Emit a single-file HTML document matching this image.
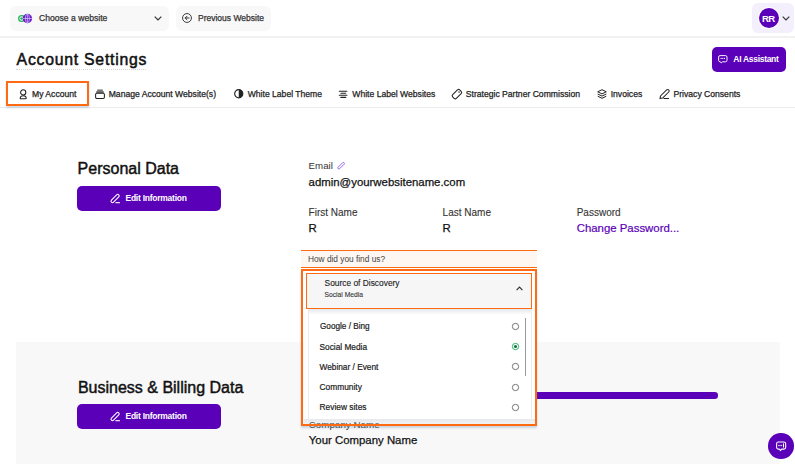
<!DOCTYPE html>
<html><head><meta charset="utf-8">
<style>
*{margin:0;padding:0;box-sizing:border-box}
html,body{width:795px;height:464px;overflow:hidden;background:#fff;font-family:"Liberation Sans",sans-serif;color:#1a1a1a}
.a{position:absolute;white-space:nowrap}
.t{position:absolute;white-space:nowrap;line-height:1}
.m{-webkit-text-stroke:0.25px currentColor}
svg{position:absolute;overflow:visible}
</style></head><body>

<!-- header -->
<div class="a" style="left:10px;top:6.2px;width:159px;height:25.3px;background:#f8f8f8;border-radius:6px"></div>
<svg style="left:0;top:0" width="40" height="30" viewBox="0 0 40 30">
  <circle cx="21.6" cy="18.5" r="2.9" fill="none" stroke="#22b35e" stroke-width="1.3"/>
  <circle cx="21.6" cy="18.5" r="1.3" fill="#22b35e"/>
  <circle cx="27.4" cy="18.5" r="4.7" fill="#6a1ec8"/>
  <ellipse cx="27.4" cy="18.5" rx="2" ry="4.4" fill="none" stroke="#e9dcff" stroke-width="0.6"/>
  <path d="M22.8 18.5h9.2M27.4 14v9" stroke="#e9dcff" stroke-width="0.6" fill="none"/>
</svg>
<div class="t m" style="left:39px;top:14.2px;font-size:8.6px;color:#333">Choose a website</div>
<svg style="left:153.8px;top:15.6px" width="8" height="5" viewBox="0 0 8 5"><path d="M0.7 0.7L4 4L7.3 0.7" stroke="#333" stroke-width="1.2" fill="none"/></svg>

<div class="a" style="left:176px;top:6.2px;width:95px;height:25.3px;background:#f8f8f8;border-radius:6px"></div>
<svg style="left:182.2px;top:13.4px" width="10" height="10" viewBox="0 0 10 10"><circle cx="5" cy="5" r="4.45" fill="none" stroke="#333" stroke-width="0.95"/><path d="M7 5H3.2M4.9 3.3L3.2 5l1.7 1.7" stroke="#333" stroke-width="1" fill="none" stroke-linecap="round" stroke-linejoin="round"/></svg>
<div class="t m" style="left:198px;top:14.2px;font-size:8.5px;color:#333">Previous Website</div>

<div class="a" style="left:752px;top:3px;width:41.5px;height:30px;background:#f3effc;border-radius:6px"></div>
<div class="a" style="left:758.5px;top:8.3px;width:20px;height:20px;border-radius:50%;background:#5a00b8;box-shadow:0 0 0 1px #fff"></div>
<div class="t" style="left:758.5px;top:13.9px;width:20px;text-align:center;font-size:9.6px;letter-spacing:-0.7px;text-indent:-0.3px;font-weight:bold;color:#fff">RR</div>
<svg style="left:782px;top:16px" width="8" height="5" viewBox="0 0 8 5"><path d="M0.7 0.7L4 4L7.3 0.7" stroke="#333" stroke-width="1.2" fill="none"/></svg>

<div class="a" style="left:0;top:35.8px;width:795px;height:2px;background:#f1f1f1"></div>

<!-- title -->
<div class="t" style="left:16.6px;top:51.5px;font-size:15.8px;letter-spacing:0.75px;-webkit-text-stroke:0.5px #111;color:#111">Account Settings</div>
<div class="a" style="left:16px;top:69px;width:130px;height:0;border-top:1px dotted #d6d6d6"></div>

<div class="a" style="left:711.5px;top:46.8px;width:74.5px;height:25px;background:#5a00b8;border-radius:5px"></div>
<svg style="left:717.5px;top:55px" width="10" height="9" viewBox="0 0 10 9"><path d="M2.1 0.6h5.4a1.5 1.5 0 0 1 1.5 1.5v3.2a1.5 1.5 0 0 1-1.5 1.5H4.5L3.2 8 2.5 6.8H2.1A1.5 1.5 0 0 1 0.6 5.3V2.1A1.5 1.5 0 0 1 2.1 0.6z" fill="none" stroke="#fff" stroke-width="0.95" stroke-linejoin="round"/><circle cx="3.1" cy="3.4" r="0.6" fill="#fff"/><circle cx="4.8" cy="3.4" r="0.6" fill="#fff"/><circle cx="6.5" cy="3.4" r="0.6" fill="#fff"/></svg>
<div class="t" style="left:733.3px;top:55.3px;font-size:8.5px;letter-spacing:-0.3px;font-weight:bold;color:#fff">AI Assistant</div>

<!-- tabs -->
<div class="a" style="left:0;top:107px;width:795px;height:1px;background:#ececec"></div>
<div id="tabs" class="m" style="position:absolute;left:0;top:0;font-size:8.6px;color:#222">
<div class="t" style="left:32px;top:89.5px">My Account</div>
<div class="t" style="left:108.7px;top:89.5px">Manage Account Website(s)</div>
<div class="t" style="left:247.7px;top:89.5px">White Label Theme</div>
<div class="t" style="left:352.3px;top:89.5px">White Label Websites</div>
<div class="t" style="left:465.8px;top:89.5px">Strategic Partner Commission</div>
<div class="t" style="left:610.7px;top:89.5px">Invoices</div>
<div class="t" style="left:673.5px;top:89.5px">Privacy Consents</div>
</div>
<!-- tab icons -->
<svg style="left:18.8px;top:87.8px" width="10" height="12" viewBox="0 0 10 12"><circle cx="4.2" cy="4.4" r="2.6" fill="none" stroke="#222" stroke-width="1.05"/><path d="M1.2 10.3c0-1.6 1.2-2.6 3-2.6s3 1 3 2.6c0 .3-.2.5-.5.5H1.7c-.3 0-.5-.2-.5-.5z" fill="none" stroke="#222" stroke-width="1.05"/></svg>
<svg style="left:95px;top:89px" width="10" height="10" viewBox="0 0 10 10"><rect x="0.6" y="4.2" width="8.8" height="5.2" rx="1.2" fill="none" stroke="#222" stroke-width="1.05"/><rect x="1.3" y="2.2" width="7.4" height="2" fill="#555"/><rect x="2.2" y="0.5" width="5.6" height="1.4" fill="#666"/></svg>
<svg style="left:234px;top:89px" width="9.5" height="9.5" viewBox="0 0 10 10"><circle cx="5" cy="5" r="4.3" fill="none" stroke="#222" stroke-width="1.2"/><path d="M5 0.7a4.3 4.3 0 0 1 0 8.6z" fill="#222"/></svg>
<svg style="left:334px;top:86px" width="20" height="16" viewBox="0 0 20 16"><path d="M5.3 5.2h7.6M7 7.3h4.7M5.3 9.3h7.6M6.8 11.4h5" stroke="#222" stroke-width="1.1" stroke-linecap="round"/></svg>
<svg style="left:448px;top:86px" width="20" height="16" viewBox="0 0 20 16"><g transform="rotate(-45 8.9 8.1)"><rect x="3.9" y="5.5" width="10" height="5.2" rx="1.6" fill="none" stroke="#222" stroke-width="1.05"/><circle cx="11.9" cy="8.1" r="0.75" fill="#222"/></g></svg>
<svg style="left:597.2px;top:89px" width="10" height="10" viewBox="0 0 10 10"><path d="M5 0.7L9.3 2.8 5 4.9 0.7 2.8z M0.7 5L5 7.1 9.3 5 M0.7 7.2L5 9.3 9.3 7.2" fill="none" stroke="#222" stroke-width="1" stroke-linejoin="round"/></svg>
<svg style="left:659px;top:89px" width="11" height="11" viewBox="0 0 11 11"><path d="M1 9.6l0.5-2.6L7.6 0.9a1.45 1.45 0 0 1 2.1 2.1L3.6 9.1z" fill="none" stroke="#222" stroke-width="1.05" stroke-linejoin="round"/><path d="M4.6 9.5h5.4" stroke="#222" stroke-width="1.05"/></svg>

<div class="a" style="left:6px;top:81px;width:82.5px;height:25.2px;border:2.6px solid #ff6a13;box-shadow:0 1.5px 2px rgba(120,150,180,0.35)"></div>

<!-- personal data -->
<div class="t" style="left:77.6px;top:161px;font-size:16px;color:#111;-webkit-text-stroke:0.45px #111">Personal Data</div>
<div class="a" style="left:77px;top:186px;width:144px;height:25px;background:#5a00b8;border-radius:5px"></div>
<svg style="left:105px;top:190px" width="20" height="16" viewBox="0 0 20 16"><g transform="rotate(-45 10.1 8.5)"><rect x="4.9" y="7" width="10.4" height="3" rx="1.5" fill="none" stroke="#fff" stroke-width="1.05"/></g><path d="M10.4 12.7h4.5" stroke="#fff" stroke-width="1.1"/></svg>
<div class="t" style="left:125.5px;top:194.3px;font-size:8.5px;letter-spacing:-0.25px;font-weight:bold;color:#fff">Edit Information</div>

<div class="t" style="left:308.6px;top:161.3px;font-size:9.7px;color:#333">Email</div>
<svg style="left:333px;top:158px" width="16" height="16" viewBox="0 0 16 16"><g transform="rotate(-45 8.1 7.75)"><rect x="3.9" y="6.7" width="8.4" height="2.1" rx="1.05" fill="none" stroke="#8f5ee6" stroke-width="0.9"/></g></svg>
<div class="t" style="left:308.6px;top:177px;font-size:11.4px;color:#111;-webkit-text-stroke:0.25px #111">admin@yourwebsitename.com</div>

<div class="t" style="left:308.6px;top:207.5px;font-size:10px;color:#333;-webkit-text-stroke:0.1px #333">First Name</div>
<div class="t" style="left:308.6px;top:222.5px;font-size:11.4px;color:#111;-webkit-text-stroke:0.25px #111">R</div>
<div class="t" style="left:442.6px;top:207.5px;font-size:10px;color:#333;-webkit-text-stroke:0.1px #333">Last Name</div>
<div class="t" style="left:442.6px;top:222.5px;font-size:11.4px;color:#111;-webkit-text-stroke:0.25px #111">R</div>
<div class="t" style="left:576.7px;top:207.5px;font-size:10px;color:#333;-webkit-text-stroke:0.1px #333">Password</div>
<div class="t" style="left:576.7px;top:222.5px;font-size:11.4px;color:#5a00b8;-webkit-text-stroke:0.2px #5a00b8">Change Password...</div>

<!-- business section -->
<div class="a" style="left:16px;top:342px;width:764px;height:122px;background:#f8f8f8"></div>
<div class="t" style="left:77.9px;top:379.5px;font-size:16px;color:#111;-webkit-text-stroke:0.45px #111">Business &amp; Billing Data</div>
<div class="a" style="left:77px;top:404px;width:144px;height:25px;background:#5a00b8;border-radius:5px"></div>
<svg style="left:105px;top:408px" width="20" height="16" viewBox="0 0 20 16"><g transform="rotate(-45 10.1 8.5)"><rect x="4.9" y="7" width="10.4" height="3" rx="1.5" fill="none" stroke="#fff" stroke-width="1.05"/></g><path d="M10.4 12.7h4.5" stroke="#fff" stroke-width="1.1"/></svg>
<div class="t" style="left:125.5px;top:412.3px;font-size:8.5px;letter-spacing:-0.25px;font-weight:bold;color:#fff">Edit Information</div>
<div class="a" style="left:522px;top:391.8px;width:196px;height:6.8px;background:#5a00b8;border-radius:0 3.3px 3.3px 0"></div>
<div class="t" style="left:308.8px;top:419.5px;font-size:9.8px;color:#333">Company Name</div>
<div class="t" style="left:308.8px;top:435px;font-size:11.4px;color:#111;-webkit-text-stroke:0.25px #111">Your Company Name</div>

<!-- dropdown overlay -->
<div class="a" style="left:301px;top:250px;width:236px;height:18px;background:#fdf6f1;border-top:1.9px solid #ff6a13;border-bottom:1.7px solid #ff6a13"></div>
<div class="t" style="left:308px;top:254.5px;font-size:8.3px;color:#444">How did you find us?</div>

<div class="a" style="left:301.2px;top:269.2px;width:236px;height:157.2px;border:2.4px solid #ff6a13;box-shadow:0 1.5px 2px rgba(120,150,180,0.35)"></div>
<div class="a" style="left:306px;top:272.8px;width:226.3px;height:36.4px;background:#f6f6f7;border:1.8px solid #ff6a13"></div>
<div class="t" style="left:324.6px;top:279px;font-size:8.4px;color:#222;-webkit-text-stroke:0.12px #222">Source of Discovery</div>
<div class="t" style="left:324.6px;top:292px;font-size:6.7px;color:#333;-webkit-text-stroke:0.1px #333">Social Media</div>
<svg style="left:516px;top:286px" width="7" height="5" viewBox="0 0 7 5"><path d="M0.6 4.2L3.5 1.2 6.4 4.2" stroke="#333" stroke-width="1.2" fill="none"/></svg>

<div class="a" style="left:303.6px;top:309px;width:231.6px;height:109.6px;background:#fff"></div>
<div class="a" style="left:303.6px;top:418.6px;width:231.6px;height:5px;background:linear-gradient(rgba(205,210,220,0.4),rgba(205,210,220,0.15))"></div>
<div class="a" style="left:308px;top:309px;width:224px;height:110px;background:#fff;border-left:1px solid #ececec;border-right:1px solid #ececec"></div>
<div class="a" style="left:308px;top:308.5px;width:224px;height:6px;background:linear-gradient(#e6e8ec,rgba(255,255,255,0))"></div>
<div class="a" style="left:525.2px;top:318px;width:1px;height:58px;background:#999"></div>
<div class="t" style="left:320px;top:323px;font-size:8.2px;color:#222;-webkit-text-stroke:0.2px #222">Google / Bing</div>
<div class="t" style="left:319.5px;top:343px;-webkit-text-stroke:0.2px #222;font-size:8.3px;color:#222">Social Media</div>
<div class="t" style="left:319.5px;top:363px;-webkit-text-stroke:0.2px #222;font-size:8.3px;color:#222">Webinar / Event</div>
<div class="t" style="left:319.5px;top:383px;-webkit-text-stroke:0.2px #222;font-size:8.4px;color:#222">Community</div>
<div class="t" style="left:319.5px;top:403px;-webkit-text-stroke:0.2px #222;font-size:8.4px;color:#222">Review sites</div>
<svg style="left:508px;top:318.9px" width="15" height="15" viewBox="0 0 15 15"><circle cx="7.5" cy="7.5" r="3.15" fill="none" stroke="#666" stroke-width="0.9"/></svg>
<svg style="left:508px;top:339.1px" width="15" height="15" viewBox="0 0 15 15"><circle cx="7.5" cy="7.5" r="3.15" fill="#fff" stroke="#27ad64" stroke-width="0.95"/><circle cx="7.5" cy="7.5" r="1.55" fill="#0b7a3a"/></svg>
<svg style="left:508px;top:359.3px" width="15" height="15" viewBox="0 0 15 15"><circle cx="7.5" cy="7.5" r="3.15" fill="none" stroke="#666" stroke-width="0.9"/></svg>
<svg style="left:508px;top:379.6px" width="15" height="15" viewBox="0 0 15 15"><circle cx="7.5" cy="7.5" r="3.15" fill="none" stroke="#666" stroke-width="0.9"/></svg>
<svg style="left:508px;top:399.7px" width="15" height="15" viewBox="0 0 15 15"><circle cx="7.5" cy="7.5" r="3.15" fill="none" stroke="#666" stroke-width="0.9"/></svg>

<!-- chat bubble -->
<div class="a" style="left:768.3px;top:433px;width:25.5px;height:25.5px;border-radius:50%;background:#5a00b8"></div>
<svg style="left:776px;top:441px" width="11" height="11" viewBox="0 0 11 11"><path d="M2.5 0.9h5.3a1.9 1.9 0 0 1 1.9 1.9v3.4a1.9 1.9 0 0 1-1.9 1.9H5.6L4.5 9.6 3.4 8.1H2.5A1.9 1.9 0 0 1 0.6 6.2V2.8A1.9 1.9 0 0 1 2.5 0.9z" fill="none" stroke="#fff" stroke-width="1.05" stroke-linejoin="round"/><circle cx="3" cy="4.4" r="0.75" fill="#fff"/><circle cx="5.1" cy="4.4" r="0.75" fill="#fff"/><path d="M7.5 2.9v3" stroke="#fff" stroke-width="1.1" stroke-linecap="round"/></svg>

</body></html>
